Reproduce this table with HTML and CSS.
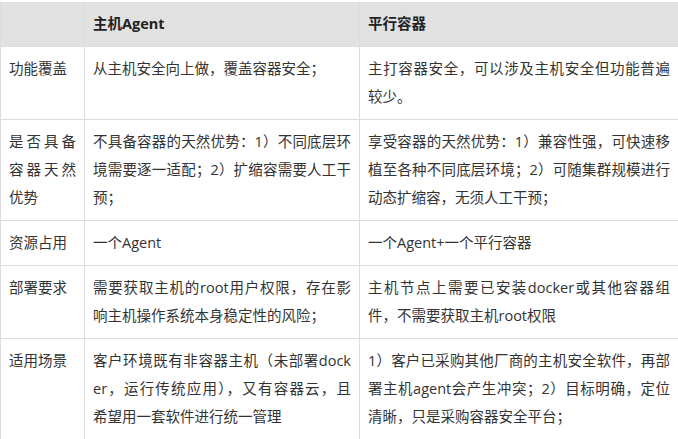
FILE: index.html
```html
<!DOCTYPE html>
<html lang="zh-CN">
<head>
<meta charset="utf-8">
<link rel="stylesheet" href="styles.css">
</head>
<body>
<table class="cmp">
  <colgroup>
    <col class="c1">
    <col class="c2">
    <col class="c3">
  </colgroup>
  <thead>
    <tr>
      <th></th>
      <th>主机Agent</th>
      <th>平行容器</th>
    </tr>
  </thead>
  <tbody>
    <tr>
      <td>功能覆盖</td>
      <td>从主机安全向上做，覆盖容器安全；</td>
      <td><span class="ln">主打容器安全，可以涉及主机安全但功能普遍</span>较少。</td>
    </tr>
    <tr>
      <td>是否具备容器天然优势</td>
      <td><span class="ln">不具备容器的天然优势：1）不同底层环</span><span class="ln">境需要逐一适配；2）扩缩容需要人工干</span>预；</td>
      <td><span class="ln">享受容器的天然优势：1）兼容性强，可快速移</span><span class="ln">植至各种不同底层环境；2）可随集群规模进行</span>动态扩缩容，无须人工干预；</td>
    </tr>
    <tr>
      <td>资源占用</td>
      <td>一个Agent</td>
      <td>一个Agent+一个平行容器</td>
    </tr>
    <tr>
      <td>部署要求</td>
      <td><span class="ln">需要获取主机的root用户权限，存在影</span>响主机操作系统本身稳定性的风险；</td>
      <td><span class="ln">主机节点上需要已安装docker或其他容器组</span>件，不需要获取主机root权限</td>
    </tr>
    <tr>
      <td>适用场景</td>
      <td><span class="ln">客户环境既有非容器主机（未部署dock</span><span class="ln">er，运行传统应用），又有容器云，且</span>希望用一套软件进行统一管理</td>
      <td><span class="ln">1）客户已采购其他厂商的主机安全软件，再部</span><span class="ln">署主机agent会产生冲突；2）目标明确，定位</span>清晰，只是采购容器安全平台；</td>
    </tr>
  </tbody>
</table>
</body>
</html>
```

FILE: styles.css
```css
html, body {
  margin: 0;
  padding: 0;
  background: #ffffff;
}

body {
  padding-top: 2px;
  font-family: "Open Sans", "Noto Sans CJK SC", sans-serif;
  font-size: 14.5px;
  color: #333333;
}

.cmp {
  width: 678px;
  table-layout: fixed;
  border-collapse: collapse;
}

.cmp .c1 { width: 84px; }
.cmp .c2 { width: 275px; }
.cmp .c3 { width: 319px; }

.cmp th,
.cmp td {
  border: 1px solid #dcdcdc;
  padding: 8px 8px;
  line-height: 28px;
  text-align: justify;
  vertical-align: top;
  word-break: break-all;
}

.cmp thead th {
  border-top: none;
  background: #e1e1e1;
  font-weight: 700;
  color: #222222;
}

.ln {
  display: block;
  text-align: justify;
  text-align-last: justify;
}
```
